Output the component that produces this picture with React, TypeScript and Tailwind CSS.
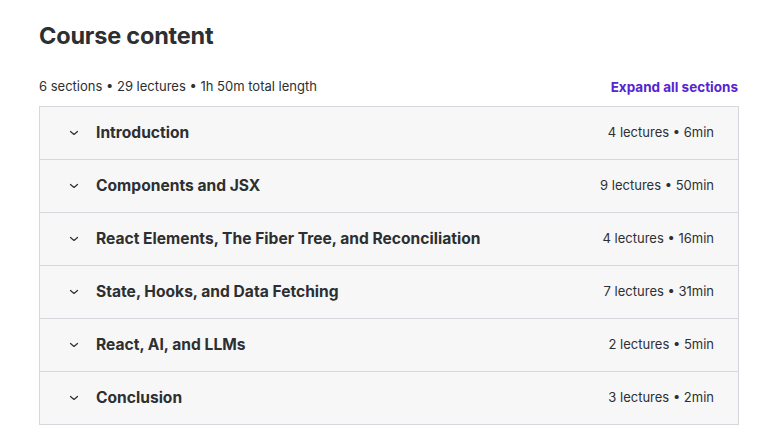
import React from "react";

const sections = [
  { title: "Introduction", meta: "4 lectures • 6min" },
  { title: "Components and JSX", meta: "9 lectures • 50min" },
  { title: "React Elements, The Fiber Tree, and Reconciliation", meta: "4 lectures • 16min" },
  { title: "State, Hooks, and Data Fetching", meta: "7 lectures • 31min" },
  { title: "React, AI, and LLMs", meta: "2 lectures • 5min" },
  { title: "Conclusion", meta: "3 lectures • 2min" },
];

function Chevron() {
  return (
    <svg width="10" height="10" viewBox="0 0 10 10" fill="none" className="text-[#2d2f31]">
      <path d="M1.5 3.5 L5 6.5 L8.5 3.5" stroke="currentColor" strokeWidth="1.2" strokeLinecap="round" strokeLinejoin="round" />
    </svg>
  );
}

export default function App() {
  return (
    <div className="w-[761px] h-[439px] bg-white text-[#2d2f31] font-['Inter',sans-serif] pl-[39px] pr-[22px] pt-[20px]">
      <h2 className="text-[23.5px] font-bold leading-[32px] tracking-[-0.2px]">Course content</h2>
      <div className="flex items-center justify-between mt-[25px] h-[20px]">
        <span className="text-[13px]">6 sections • 29 lectures • 1h 50m total length</span>
        <button className="text-[13.5px] font-bold text-[#5624d0] pr-[1px]">Expand all sections</button>
      </div>
      <div className="mt-[9px] border border-[#d6d7dc] w-[700px]">
        {sections.map((s, i) => (
          <div
            key={s.title}
            className={`flex items-center bg-[#f7f7f8] pl-[29px] pr-[24px] ${i > 0 ? "h-[53px] border-t border-[#d6d7dc]" : "h-[52px]"}`}
          >
            <Chevron />
            <span className="ml-[17px] text-[15.6px] font-bold flex-1">{s.title}</span>
            <span className="text-[13px]">{s.meta}</span>
          </div>
        ))}
      </div>
    </div>
  );
}
